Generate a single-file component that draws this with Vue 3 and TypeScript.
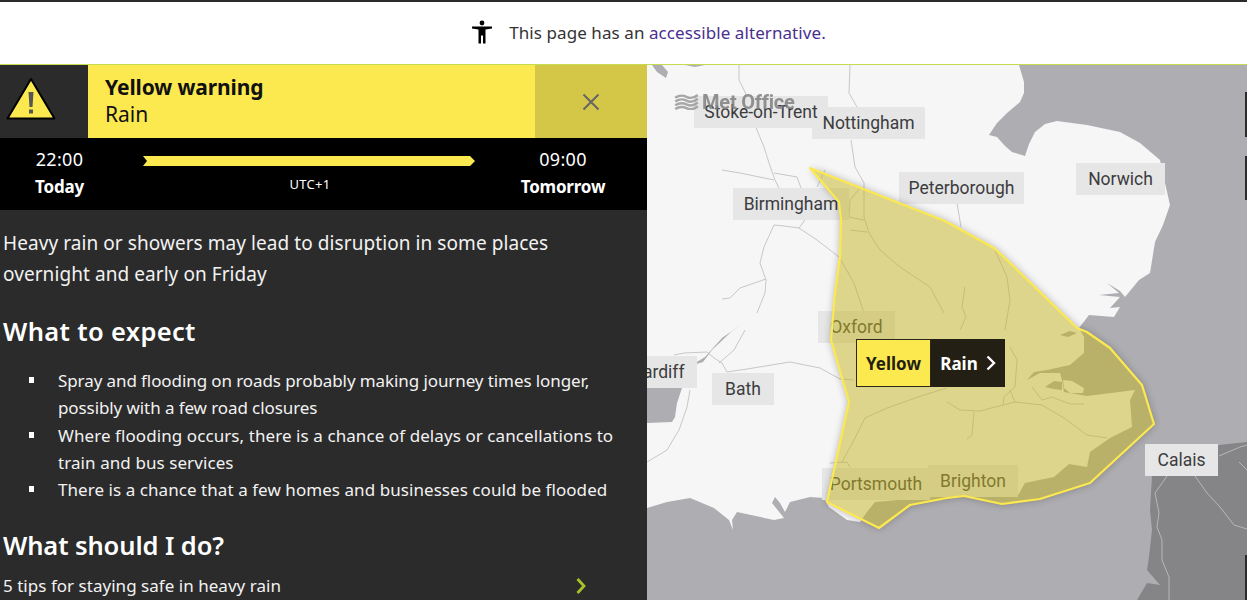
<script setup lang="ts">
interface MapLabel { name: string; left: number; top: number; width: number }
const labels: MapLabel[] = [
  { name: 'Nottingham', left: 165, top: 42, width: 113 },
  { name: 'Stoke-on-Trent', left: 47, top: 31, width: 134 },
  { name: 'Birmingham', left: 86, top: 123, width: 116 },
  { name: 'Peterborough', left: 252, top: 107, width: 125 },
  { name: 'Norwich', left: 429, top: 98, width: 89 },
  { name: 'Oxford', left: 171, top: 246, width: 77 },
  { name: 'Cardiff', left: -28, top: 291, width: 78 },
  { name: 'Bath', left: 65, top: 308, width: 62 },
  { name: 'Portsmouth', left: 175, top: 403, width: 108 },
  { name: 'Brighton', left: 281, top: 400, width: 90 },
  { name: 'Calais', left: 498, top: 379, width: 73 },
]
const bullets: string[] = [
  'Spray and flooding on roads probably making journey times longer, possibly with a few road closures',
  'Where flooding occurs, there is a chance of delays or cancellations to train and bus services',
  'There is a chance that a few homes and businesses could be flooded',
]
const warningArea =
  'M810 168 L945 221 L994 248 L1005 258 L1077 328 L1087 332 L1110 348 L1142 385 L1154 424 L1090 483 L1040 499 L1002 504 L964 496 L947 498 L910 505 L879 528 L827 502 L849 402 L831 340 L835 293 L840 257 L841 220 L839 202 Z'
</script>

<template>
  <div class="page">
    <div class="access">
      <svg class="person" viewBox="0 0 24 24" width="24" height="24">
        <circle cx="12" cy="3" r="2.4" fill="#000" />
        <path d="M2 6.500 L22 6.500 L22 8.600 L15.500 9.600 L15.500 15 L15.500 23.500 L13 23.500 L13 15.500 L11 15.500 L11 23.500 L8.500 23.500 L8.500 9.600 L2 8.600 Z" fill="#000" />
      </svg>
      <span class="access-text">This page has an <a class="access-link">accessible alternative.</a></span>
    </div>
    <div class="main">
      <aside class="panel">
        <header class="warn">
          <div class="warn-icon">
            <svg viewBox="0 0 50 43" width="50" height="43">
              <path d="M25 2 L48.500 41.500 L1.500 41.500 Z" fill="#fce94f" stroke="#000" stroke-width="2" stroke-linejoin="round" />
              <path d="M22.500 15 H27.500 L26.500 30 H23.500 Z M23 32.500 H27 V36.500 H23 Z" fill="#555" />
            </svg>
          </div>
          <div class="warn-title">
            <div class="warn-level">Yellow warning</div>
            <div class="warn-type">Rain</div>
          </div>
          <button class="warn-close" type="button" aria-label="Close">
            <svg viewBox="0 0 18 18" width="18" height="18">
              <path d="M1.500 1.500 L16.500 16.500 M16.500 1.500 L1.500 16.500" stroke="#666" stroke-width="2" fill="none" />
            </svg>
          </button>
        </header>
        <div class="timeline">
          <div class="time-col left-col">
            <div class="time">22:00</div>
            <div class="day">Today</div>
          </div>
          <div class="bar-col">
            <svg class="bar" viewBox="0 0 332 10" width="332" height="10" preserveAspectRatio="none">
              <path d="M0 0 H327 L332 5 L327 10 H0 L4 5 Z" fill="#fce94f" />
            </svg>
            <div class="utc">UTC+1</div>
          </div>
          <div class="time-col right-col">
            <div class="time">09:00</div>
            <div class="day">Tomorrow</div>
          </div>
        </div>
        <div class="body">
          <p class="lead">Heavy rain or showers may lead to disruption in some places overnight and early on Friday</p>
          <h2 class="h-expect">What to expect</h2>
          <ul class="list">
            <li v-for="b in bullets" :key="b">{{ b }}</li>
          </ul>
          <h2 class="h-do">What should I do?</h2>
          <div class="tip">
            <span>5 tips for staying safe in heavy rain</span>
            <svg viewBox="0 0 10 16" width="10" height="16">
              <path d="M1.500 1 L8 8 L1.500 15" stroke="#a8c32a" stroke-width="2.800" fill="none" />
            </svg>
          </div>
        </div>
      </aside>
      <section class="map">
        <svg class="map-layer" viewBox="647 65 600 535" preserveAspectRatio="none">
          <rect x="647" y="65" width="600" height="535" fill="#aeaeb2" />
          <path d="M647 65 L1019 65 L1024 82 L1024 93 L1020 102 L1007 113 L997 123 L989 135 L997 137 L1005 146 L1012 152 L1025 156 L1029 144 L1035 132 L1045 124 L1057 121 L1087 125 L1120 132 L1140 143 L1160 160 L1165 183 L1170 205 L1163 225 L1155 242 L1150 273 L1139 280 L1125 297 L1120 291 L1107 283 L1119 293 L1099 295 L1120 297 L1110 308 L1120 307 L1114 317 L1089 315 L1079 328 L1084 337 L1084 353 L1070 365 L1047 370 L1034 372 L1027 380 L1040 373 L1060 373 L1062 380 L1064 392 L1087 396 L1135 390 L1130 400 L1132 427 L1110 438 L1090 452 L1087 467 L1069 464 L1054 477 L1025 483 L1017 497 L934 497 L875 502 L867 512 L860 522 L847 520 L829 507 L824 498 L810 497 L790 502 L785 512 L780 503 L775 497 L772 503 L784 518 L774 520 L737 512 L732 520 L733 530 L729 520 L714 508 L690 498 L667 502 L647 508 Z" fill="#f6f6f6" />
          <path d="M1063 380 L1072 381 L1084 388 L1083 393 L1070 393 L1064 388 Z" fill="#f6f6f6" />
          <path d="M1045 387 L1054 381 L1062 382 L1062 390 L1054 389 Z M1060 335 L1070 331 L1077 333 L1068 337 Z" fill="#aeaeb2" />
          <path d="M652 65 L662 65 L668 72 L666 78 L657 72 Z M685 65 L705 65 L695 67 Z M742 324 L731 332 L712 350 L703 362 L690 366 L697 373 L682 388 L677 403 L675 417 L672 422 L647 423 L647 388 L680 372 L705 357 L722 338 Z" fill="#aeaeb2" />
          <path d="M1247 442 L1219 445 L1190 470 L1152 476 L1150 510 L1152 530 L1149 557 L1147 570 L1160 585 L1147 583 L1137 600 L1247 600 Z" fill="#858587" />
          <g class="roads">
            <path d="M739 65 L739 80 L745 92 L757 130 L764 147 L769 163 L775 180 L779 188 M774 225 L764 247 L760 263 L766 280 L765 293 L757 313" />
            <path d="M722 170 L740 173 L774 180 M774 173 L797 177 L801 188 M825 170 L817 187" />
            <path d="M774 225 L784 226 L799 228 L817 240 L839 257 L854 283 L864 313 M799 228 L807 217 M766 279 L740 288 L730 298 L722 299" />
            <path d="M850 65 L849 93 L857 107 M851 140 L855 167 L864 183 L864 217 L869 233 L880 250 L900 267 L930 287 L944 313" />
            <path d="M860 188 L850 200 L849 217 L864 220 M850 230 L867 232 M957 203 L961 227 M994 248 L1007 277 L1010 300 L1005 330 M965 287 L962 307 L966 317 L960 330" />
            <path d="M674 355 L684 353 L707 352 L714 358 L722 363 L727 372 L747 369 L790 362 L820 368 L840 379 L854 380 M745 330 L734 350 L719 363" />
            <path d="M690 390 L687 407 L679 430 L667 450 L647 462" />
            <path d="M947 388 L924 395 L887 408 L865 418 L854 440 L842 462 M830 463 L847 462 L850 467" />
            <path d="M1010 347 L1017 360 L1015 387 L1004 397 L1003 405 L1015 402 L1042 405 L1064 418 L1087 435 L1107 438 M1032 387 L1042 400 L1052 397 L1070 404 L1084 404 M947 402 L960 410 L980 411 L1003 405 M974 412 L972 435 L967 439 M1010 390 L1015 402" />
          </g>
          <g class="roads-fr">
            <path d="M1167 476 L1155 493 L1159 513 L1157 527 L1162 540 L1162 560 L1169 577 L1169 600 M1195 476 L1207 493 L1220 507 L1234 525 L1247 529 M1219 456 L1240 447 L1247 445 M1239 462 L1247 470" />
          </g>
        </svg>
        <div v-for="l in labels" :key="'box-' + l.name" class="label-box" :style="{ left: l.left + 'px', top: l.top + 'px', width: l.width + 'px' }"></div>
        <div v-for="l in labels" :key="l.name" class="label" :style="{ left: l.left + 'px', top: l.top + 'px', width: l.width + 'px' }">{{ l.name }}</div>
        <div class="logo">
          <svg viewBox="0 0 26 17" width="25" height="16">
            <path d="M1 4 Q7 0 13 3 T25 1 M1 8 Q7 4 13 7 T25 5 M1 12 Q7 8 13 11 T25 9 M1 16 Q7 12 13 15 T25 13" stroke="#9a9a9a" stroke-width="2.600" fill="none" />
          </svg>
          <span>Met Office</span>
        </div>
        <svg class="map-layer" viewBox="647 65 600 535" preserveAspectRatio="none">
          <defs>
            <filter id="area-blur" x="-10%" y="-10%" width="120%" height="120%">
              <feGaussianBlur stdDeviation="4" />
            </filter>
            <mask id="area-outside" maskUnits="userSpaceOnUse" x="647" y="65" width="600" height="535">
              <rect x="647" y="65" width="600" height="535" fill="#fff" />
              <path :d="warningArea" fill="#000" />
            </mask>
          </defs>
          <g mask="url(#area-outside)">
            <path :d="warningArea" fill="#000" opacity=".32" filter="url(#area-blur)" />
          </g>
          <path :d="warningArea" fill="rgba(196,180,32,.5)" stroke="#fce94f" stroke-width="2.200" stroke-linejoin="round" />
        </svg>
        <div class="popup">
          <span class="popup-level">Yellow</span>
          <span class="popup-type">Rain
            <svg viewBox="0 0 10 16" width="10" height="16">
              <path d="M1.500 1.500 L8 8 L1.500 14.500" stroke="#fff" stroke-width="2.400" fill="none" />
            </svg>
          </span>
        </div>
        <div class="edge e1"></div>
        <div class="edge e2"></div>
        <div class="edge e3"></div>
      </section>
    </div>
  </div>
</template>

<style>
html, body { margin: 0; padding: 0; background: #fff; overflow: hidden; }
</style>

<style scoped>
.page { width: 1247px; height: 600px; overflow: hidden; font-family: "Noto Sans", sans-serif; display: flex; flex-direction: column; }
.access { box-sizing: border-box; height: 65px; border-top: 2px solid #2b2b2b; border-bottom: 1px solid #c3dc50; display: flex; align-items: center; justify-content: center; gap: 15px; background: #fff; flex: none; padding: 0 0 2px 49px; }
.person { display: block; }
.access-text { font-size: 17px; letter-spacing: .08px; color: #333; }
.access-link { color: #4a2f8f; }
.main { flex: 1; display: flex; min-height: 0; }
.panel { width: 647px; flex: none; background: #2b2b2b; color: #f2f2f2; overflow: hidden; display: flex; flex-direction: column; }
.warn { display: flex; height: 73px; flex: none; background: #fce94f; color: #111; }
.warn-icon { width: 88px; background: #2b2b2b; display: flex; align-items: center; justify-content: flex-start; padding: 0 0 7px 6px; box-sizing: border-box; }
.warn-title { flex: 1; padding: 8px 0 0 17px; }
.warn-level { font-size: 21px; font-weight: 700; line-height: 28px; letter-spacing: -.12px; }
.warn-type { font-size: 21px; line-height: 27px; }
.warn-close { width: 112px; border: 0; background: #d4c647; display: flex; align-items: center; justify-content: center; padding: 0; }
.timeline { height: 72px; flex: none; background: #000; color: #fff; display: flex; }
.time-col { text-align: center; display: flex; flex-direction: column; padding-top: 10px; box-sizing: border-box; }
.left-col { width: 119px; }
.right-col { width: 168px; }
.time { font-size: 18px; line-height: 22px; letter-spacing: .3px; }
.day { font-size: 17px; font-weight: 700; line-height: 33px; letter-spacing: -.2px; }
.bar-col { width: 360px; display: flex; flex-direction: column; align-items: center; padding-top: 18px; box-sizing: border-box; }
.bar { display: block; margin-left: 19px; }
.utc { font-size: 13px; line-height: 18px; margin-top: 9px; margin-left: 22px; letter-spacing: .3px; }
.body { padding: 18px 0 0 3px; }
.lead { margin: 0; font-size: 19px; line-height: 31px; width: 590px; letter-spacing: .07px; }
.h-expect, .h-do { margin: 0; font-size: 25.500px; font-weight: 600; line-height: 34px; color: #fff; }
.h-expect { margin-top: 24px; letter-spacing: .35px; }
.h-do { margin-top: 25px; letter-spacing: -.1px; }
.list { margin: 19px 0 0; padding: 0 0 0 55px; list-style: none; font-size: 17px; line-height: 27.300px; width: 565px; letter-spacing: -.09px; }
.list li { position: relative; }
.list li:nth-child(2) { letter-spacing: .08px; }
.list li:nth-child(3) { letter-spacing: .06px; }
.list li::before { content: ""; position: absolute; left: -29px; top: 10px; width: 5px; height: 6px; background: #fff; }
.tip { display: flex; align-items: center; justify-content: space-between; font-size: 17px; line-height: 24px; margin-top: 12px; width: 583px; letter-spacing: .03px; }
.map { flex: 1; position: relative; overflow: hidden; background: #aeaeb2; }
.map-layer { position: absolute; left: 0; top: 0; width: 600px; height: 535px; display: block; }
.roads path { fill: none; stroke: #c2c2c2; stroke-width: .9; }
.roads-fr path { fill: none; stroke: #bcbcbc; stroke-width: .9; }
.label-box { position: absolute; height: 32px; background: #e6e6e6; }
.label { position: absolute; height: 32px; line-height: 33px; color: #3c3c3e; font-family: Roboto, sans-serif; font-size: 17.500px; text-align: center; white-space: nowrap; }
.logo { position: absolute; left: 27px; top: 27px; display: flex; align-items: center; gap: 3px; color: #808080; font-family: Roboto, sans-serif; font-weight: 700; font-size: 20px; letter-spacing: -.2px; line-height: 20px; opacity: .85; }
.popup { position: absolute; left: 209px; top: 274px; height: 48px; display: flex; font-family: "Noto Sans", sans-serif; font-weight: 700; font-size: 17px; }
.popup-level { background: #fce94f; color: #231f14; width: 75px; box-sizing: border-box; border: 1px solid #2b2618; display: flex; align-items: center; justify-content: center; }
.popup-type { background: #231f14; color: #fff; width: 74px; display: flex; align-items: center; justify-content: center; gap: 8px; }
.edge { position: absolute; right: 0; width: 2px; background: #2b2b2b; }
.e1 { top: 27px; height: 45px; }
.e2 { top: 91px; height: 44px; }
.e3 { top: 490px; height: 45px; }
</style>
